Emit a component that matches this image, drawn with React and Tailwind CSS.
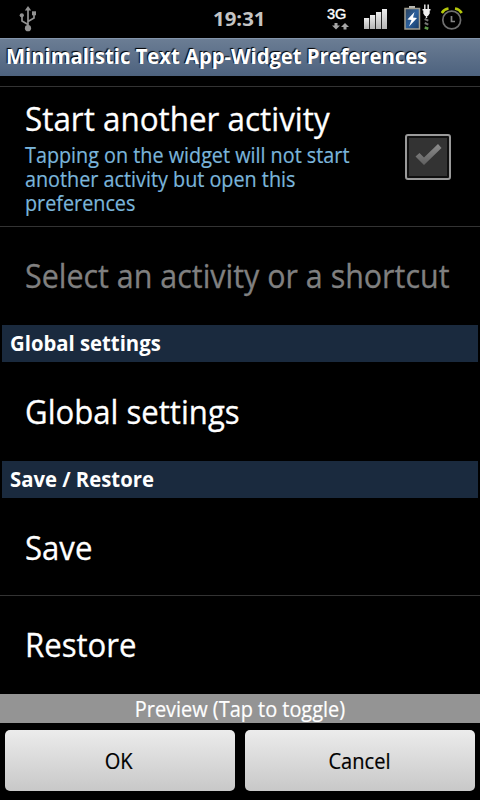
import clsx from "clsx";

const UsbIcon = () => (
  <svg width="18" height="26" viewBox="0 0 18 26" fill="none" stroke="#929292" strokeWidth="1.7">
    <path d="M9 3v18M9 18.5l-6-3.5V9M9 15.5l6-3.5V8" />
    <path d="M9 0l3.2 4.500H5.8z" fill="#929292" stroke="none" />
    <circle cx="9" cy="22.2" r="3.1" fill="#929292" stroke="none" />
    <circle cx="2.8" cy="9.3" r="2.1" fill="#929292" stroke="none" />
    <path d="M13 5.300h4v4h-4z" fill="#929292" stroke="none" />
  </svg>
);

const DataArrows = () => (
  <svg width="18" height="7" viewBox="0 0 18 7" fill="#a5a5a5" className="absolute left-[5px] top-[23px]">
    <path d="M2.5 0h3v2.5H8L4 6.5 0 2.5h2.5zM11.5 6.5h3V4H17L13 0 9 4h2.5z" />
  </svg>
);

const SignalIcon = () => (
  <svg width="24" height="21" viewBox="0 0 24 21">
    <defs>
      <linearGradient id="bar" x1="0" y1="0" x2="0" y2="1">
        <stop offset="0" stopColor="#ececec" />
        <stop offset="1" stopColor="#b5b5b5" />
      </linearGradient>
    </defs>
    <g fill="url(#bar)">
      <rect x="0" y="9" width="5.2" height="11" />
      <rect x="6" y="6" width="5.2" height="14" />
      <rect x="12" y="3" width="5.2" height="17" />
      <rect x="18" y="0" width="5" height="20" />
    </g>
  </svg>
);

const BatteryIcon = () => (
  <svg width="28" height="27" viewBox="0 0 28 27">
    <defs>
      <linearGradient id="cell" x1="0" y1="0" x2="1" y2="1">
        <stop offset="0" stopColor="#2c4058" />
        <stop offset="0.5" stopColor="#2b5f9c" />
        <stop offset="1" stopColor="#173a63" />
      </linearGradient>
    </defs>
    <rect x="5" y="2" width="6" height="3" fill="#b9b9b4" />
    <rect x="1" y="4.5" width="14.5" height="20.5" fill="url(#cell)" stroke="#a09d90" strokeWidth="1.5" />
    <path d="M10.500 8L3.500 15.500l4 .5L5 22.500l8-8.500-4-.5z" fill="#fff" />
    {/* plug and its cord */}
    <path d="M20 0.500h1.600v5H20zM23.400 0.500h1.600v5h-1.600z" fill="#d8d8d8" />
    <path d="M18.500 5h8v1.500h-.8v3L24 12h-3l-1.700-2.500v-3h-.8z" fill="#f0f0f0" />
    <path d="M22.500 12v2" stroke="#ddd" strokeWidth="1.500" />
    <path d="M20.700 15l3.600 1.600M20.700 19l3.600 1.600" stroke="#777" strokeWidth="2" />
    <path d="M20.700 23.500l3.600 1.200" stroke="#5f9a4a" strokeWidth="2.5" />
  </svg>
);

const AlarmIcon = () => (
  <svg width="22" height="24" viewBox="0 0 22 24" fill="none">
    <circle cx="10.700" cy="13" r="8.900" stroke="#6f6f6f" strokeWidth="1.700" />
    <path d="M10.500 9v5.500H14" stroke="#858585" strokeWidth="1.700" />
    <path d="M.8 6Q3 2.200 7.500 1.500M14 1.500Q18.500 2.200 20.700 6" stroke="#b4c70b" strokeWidth="2.600" />
  </svg>
);

const StatusBar = () => (
  <div className="flex h-[38px] shrink-0 items-start">
    <div className="ml-[19px] mt-1.5 w-[194px]">
      <UsbIcon />
    </div>
    <div className="w-[114px] text-[20px] font-bold leading-[38px] text-[#c4c4c4]">
      <span className="inline-block origin-left scale-x-[1.02]">19:31</span>
    </div>
    <div className="relative h-[38px] w-[37px] text-[14px] leading-[27px] text-white [-webkit-text-stroke:0.4px]">
      <span className="inline-block origin-left scale-x-[1.04] font-['Liberation_Sans',sans-serif]">3G</span>
      <DataArrows />
    </div>
    <div className="mt-[9px] w-[40px]">
      <SignalIcon />
    </div>
    <div className="mt-1 w-[37px]">
      <BatteryIcon />
    </div>
    <div className="mt-[7px]">
      <AlarmIcon />
    </div>
  </div>
);

const SectionHeader = ({ children }) => (
  <div className="mx-0.5 flex h-[37px] shrink-0 items-center bg-[#1a2a3e] pl-2 text-[21px] font-bold">
    <span className="origin-left scale-x-[0.966] whitespace-nowrap">{children}</span>
  </div>
);

const Preference = ({ title, disabled, className }) => (
  <div className={clsx("flex shrink-0 items-center pl-[25px] text-[33px]", disabled && "text-[#808080]", className)}>
    <span
      className={clsx(
        "origin-left whitespace-nowrap [-webkit-text-stroke:0.3px]",
        disabled ? "scale-x-[0.922]" : "scale-x-[0.943]"
      )}
    >
      {title}
    </span>
  </div>
);

const CheckBox = () => (
  <div className="h-[46px] w-[46px] rounded-[3px] border-2 border-[#9a9a9a] bg-[#101010] p-0.5">
    <svg width="38" height="38" viewBox="0 0 38 38" className="bg-[#333]">
      <defs>
        <linearGradient id="tick" x1="0" y1="0" x2="0" y2="1">
          <stop offset="0" stopColor="#8c8c8c" />
          <stop offset="1" stopColor="#606060" />
        </linearGradient>
      </defs>
      <path d="M6.500 18.500l4-3.500 4.500 4.500L29 6l3.500 4L15 27z" fill="url(#tick)" />
    </svg>
  </div>
);

const Button = ({ children }) => (
  <button className="h-[61px] flex-1 rounded-[5px] bg-linear-to-b from-[#ececec] to-[#c8c8c8] pt-0.5 text-[21px] text-black [-webkit-text-stroke:0.2px]">
    <span className="relative -left-px inline-block scale-x-[0.955]">{children}</span>
  </button>
);

const App = () => (
  <div className="flex h-[800px] w-[480px] flex-col overflow-hidden bg-black font-['Open_Sans',sans-serif] text-white">
    <StatusBar />
    <div className="flex h-[38px] shrink-0 items-center border-t border-[#8495ab] bg-linear-to-b from-[#6b7d94] to-[#4d627e] pb-0.5 pl-1.5 text-[21px] font-bold [text-shadow:-1px_-1px_1px_#000]">
      <span className="origin-left scale-x-[0.962] whitespace-nowrap">Minimalistic Text App-Widget Preferences</span>
    </div>

    <div className="mt-2.5 flex h-[141px] shrink-0 items-center justify-between border-y border-[#333] pl-[25px] pr-[29px]">
      <div>
        <div className="mb-0.5 origin-left scale-x-[0.951] whitespace-nowrap text-[33px] leading-[42px] [-webkit-text-stroke:0.3px] relative -top-px">
          Start another activity
        </div>
        <p className="w-[350px] origin-left scale-x-[0.942] text-[21px] leading-6 text-[#7ab5db] [-webkit-text-stroke:0.2px]">
          Tapping on the widget will not start another activity but open this preferences
        </p>
      </div>
      <CheckBox />
    </div>
    <Preference title="Select an activity or a shortcut" disabled className="h-[98px]" />

    <SectionHeader>Global settings</SectionHeader>
    <Preference title="Global settings" className="h-[99px]" />

    <SectionHeader>Save / Restore</SectionHeader>
    <Preference title="Save" className="h-[98px] border-b border-[#333] pt-0.5" />
    <Preference title="Restore" className="h-[98px]" />

    <div className="h-[29px] shrink-0 bg-[#949494] pt-px text-center text-[21px] leading-[29px] [-webkit-text-stroke:0.2px]">
      <span className="inline-block scale-x-[0.948]">Preview (Tap to toggle)</span>
    </div>
    <div className="flex gap-2.5 px-[5px] pt-[7px]">
      <Button>OK</Button>
      <Button>Cancel</Button>
    </div>
  </div>
);

export default App;
